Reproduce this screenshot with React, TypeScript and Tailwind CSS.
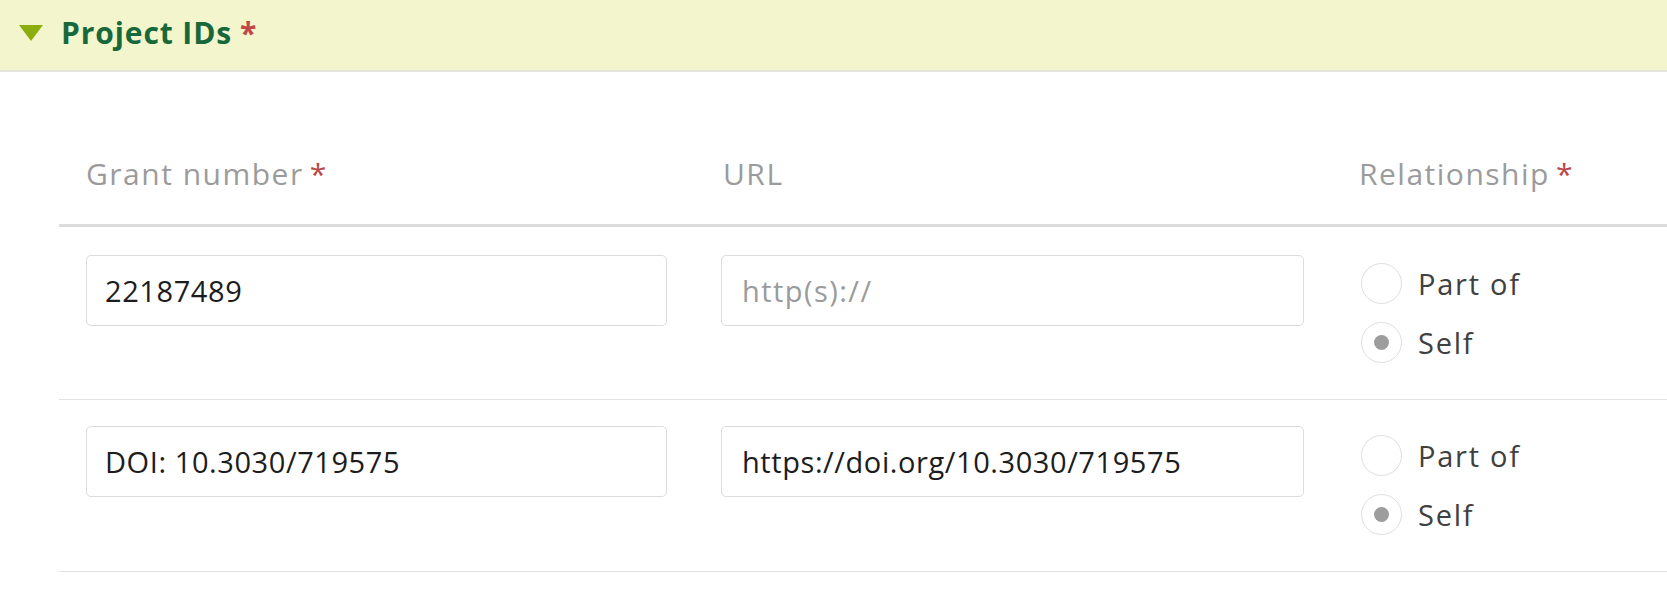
import React from "react"

const font = { fontFamily: '"Open Sans", "Liberation Sans", sans-serif' }

type Row = { grant: string; url: string; rel: "part" | "self" }

const rows: Row[] = [
  { grant: "22187489", url: "", rel: "self" },
  { grant: "DOI: 10.3030/719575", url: "https://doi.org/10.3030/719575", rel: "self" },
]

function Radio({ checked, label }: { checked: boolean; label: string }) {
  return (
    <label className="flex items-center gap-[16px]">
      <span className="flex h-[41px] w-[41px] items-center justify-center rounded-full border border-[#dedede] bg-white">
        {checked && <span className="h-[15px] w-[15px] rounded-full bg-[#9d9d9d]" />}
      </span>
      <span className="text-[29px] leading-[40px] tracking-[0.06em] text-[#404040]">{label}</span>
    </label>
  )
}

function Label({ text, required }: { text: string; required?: boolean }) {
  return (
    <span className="text-[30px] leading-[40px] tracking-[0.05em] text-[#9b9b9b]">
      {text}
      {required && <span className="ml-[6px] text-[#b94545]">*</span>}
    </span>
  )
}

export default function App() {
  return (
    <div style={font} className="min-h-[610px] w-[1667px] bg-white">
      {/* section header */}
      <div className="flex h-[72px] items-center gap-[18px] border-b-2 border-[#e4e6dc] bg-[#f3f6cc] pb-[4px] pl-[19px]">
        <svg width="24" height="16" viewBox="0 0 24 16" aria-hidden="true">
          <polygon points="0,0 24,0 12,16" fill="#8cad0e" />
        </svg>
        <h2 className="text-[30px] font-bold leading-[40px] tracking-[0.03em] text-[#17683a]">
          Project IDs<span className="ml-[8px] text-[#c24848]">*</span>
        </h2>
      </div>

      <div className="pl-[59px]">
        {/* column labels */}
        <div className="grid grid-cols-[635px_637px_1fr] border-b-[3px] border-[#dddddd] pb-[30px] pt-[82px]">
          <div className="pl-[27px]">
            <Label text="Grant number" required />
          </div>
          <div className="pl-[29px]">
            <Label text="URL" />
          </div>
          <div className="pl-[28px]">
            <Label text="Relationship" required />
          </div>
        </div>

        {rows.map((r, i) => (
          <div
            key={i}
            className={i === 0 ? "grid grid-cols-[635px_637px_1fr] border-b border-[#e3e3e3] pb-[36px] pt-[28px]" : "grid grid-cols-[635px_637px_1fr] border-b border-[#e3e3e3] pb-[36px] pt-[26px]"}
          >
            <div className="px-[27px]">
              <input
                readOnly
                defaultValue={r.grant}
                className="h-[71px] w-full rounded-[5px] border border-[#dcdcdc] bg-white pl-[18px] text-[29px] tracking-[0.02em] text-[#1c1c1c] outline-none"
              />
            </div>
            <div className="px-[27px]">
              <input
                readOnly
                defaultValue={r.url}
                placeholder="http(s)://"
                className="h-[71px] w-full rounded-[5px] border border-[#dcdcdc] bg-white pl-[20px] text-[29px] tracking-[0.02em] text-[#1c1c1c] outline-none placeholder:text-[#9b9b9b] placeholder:tracking-[0.05em]"
              />
            </div>
            <div className={i === 0 ? "flex flex-col gap-[18px] pl-[30px] pt-[8px]" : "flex flex-col gap-[18px] pl-[30px] pt-[9px]"}>
              <Radio checked={r.rel === "part"} label="Part of" />
              <Radio checked={r.rel === "self"} label="Self" />
            </div>
          </div>
        ))}
      </div>
    </div>
  )
}
